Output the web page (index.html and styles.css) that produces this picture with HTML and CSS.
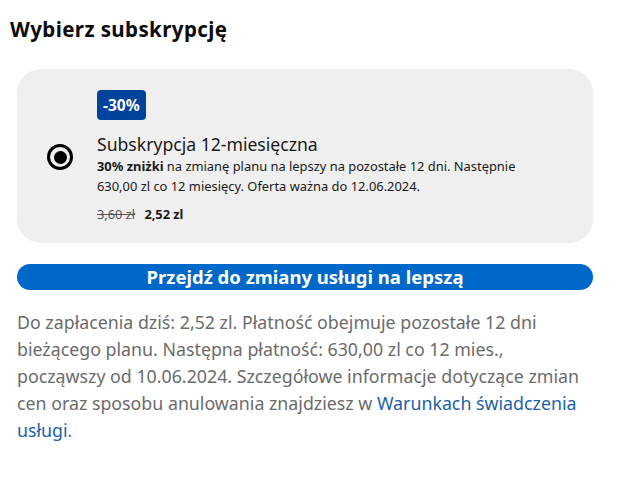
FILE: index.html
```html
<!DOCTYPE html>
<html lang="pl">
<head>
  <meta charset="UTF-8">
  <meta name="viewport" content="width=device-width, initial-scale=1.0">
  <title>Wybierz subskrypcję</title>
  <link rel="stylesheet" href="styles.css">
</head>
<body>
  <div class="page">
    <h1 class="title">Wybierz subskrypcję</h1>

    <div class="section">
      <!-- karta oferty -->
      <label class="offer">
        <span class="radio"><span class="radio-dot"></span></span>
        <span class="offer-body">
          <span class="badge">-30%</span>
          <span class="offer-name">Subskrypcja 12-miesięczna</span>
          <span class="offer-desc"><b>30% zniżki</b> na zmianę planu na lepszy na pozostałe 12 dni. Następnie<br>630,00 zl co 12 miesięcy. Oferta ważna do 12.06.2024.</span>
          <span class="offer-price"><s>3,60 zł</s> <b>2,52 zl</b></span>
        </span>
      </label>

      <button class="button" type="button">Przejdź do zmiany usługi na lepszą</button>

      <p class="note">
        Do zapłacenia dziś: 2,52 zl. Płatność obejmuje pozostałe 12 dni<br>
        bieżącego planu. Następna płatność: 630,00 zl co 12 mies.,<br>
        począwszy od 10.06.2024. Szczegółowe informacje dotyczące zmian<br>
        cen oraz sposobu anulowania znajdziesz w <a href="#">Warunkach świadczenia<br>usługi</a>.
      </p>
    </div>
  </div>
</body>
</html>
```

FILE: styles.css
```css
body {
  margin: 0;
  padding: 0;
  background: #fff;
  color: #000;
  font-family: 'Noto Sans', 'Open Sans', sans-serif;
}

.page {
  padding: 15px 10px 0 10px;
}

.title {
  margin: 0;
  font-size: 20.5px;
  letter-spacing: 0.4px;
  line-height: 28px;
  font-weight: 700;
  color: #0b0b0b;
}

.section {
  width: 576px;
  margin: 26px 0 0 7px;
}

.offer {
  display: flex;
  align-items: center;
  gap: 24px;
  background: #efefef;
  border-radius: 24px;
  padding: 20px 20px 18px 30px;
  height: 174px;
  box-sizing: border-box;
}

.radio {
  flex: none;
  width: 26px;
  height: 26px;
  border: 3px solid #000;
  border-radius: 50%;
  box-sizing: border-box;
  display: flex;
  align-items: center;
  justify-content: center;
}

.radio-dot {
  width: 13px;
  height: 13px;
  border-radius: 50%;
  background: #000;
}

.offer-body {
  display: flex;
  flex-direction: column;
  align-items: flex-start;
}

.badge {
  background: #00439c;
  color: #fff;
  font-weight: 700;
  font-size: 15.5px;
  line-height: 30px;
  padding: 0 6px;
  border-radius: 4px;
  margin-bottom: 12px;
}

.offer-name {
  font-size: 17.6px;
  line-height: 24px;
  color: #1a1a1a;
}

.offer-desc {
  font-size: 12.9px;
  line-height: 20px;
  color: #1a1a1a;
}

.offer-price {
  font-size: 12.8px;
  line-height: 20px;
  margin-top: 8px;
  color: #1a1a1a;
}

.offer-price s {
  color: #555;
  margin-right: 6px;
}

.button {
  display: block;
  width: 100%;
  margin-top: 21px;
  height: 26px;
  padding: 0;
  border: none;
  border-radius: 13px;
  background: #0068c9;
  color: #fff;
  font-family: inherit;
  font-size: 18.5px;
  font-weight: 700;
  line-height: 26px;
  cursor: pointer;
}

.note {
  margin: 19px 0 0 0;
  font-size: 17.8px;
  line-height: 27px;
  color: #6b6b6b;
}

.note a {
  color: #1d5fa8;
  text-decoration: none;
}
```
